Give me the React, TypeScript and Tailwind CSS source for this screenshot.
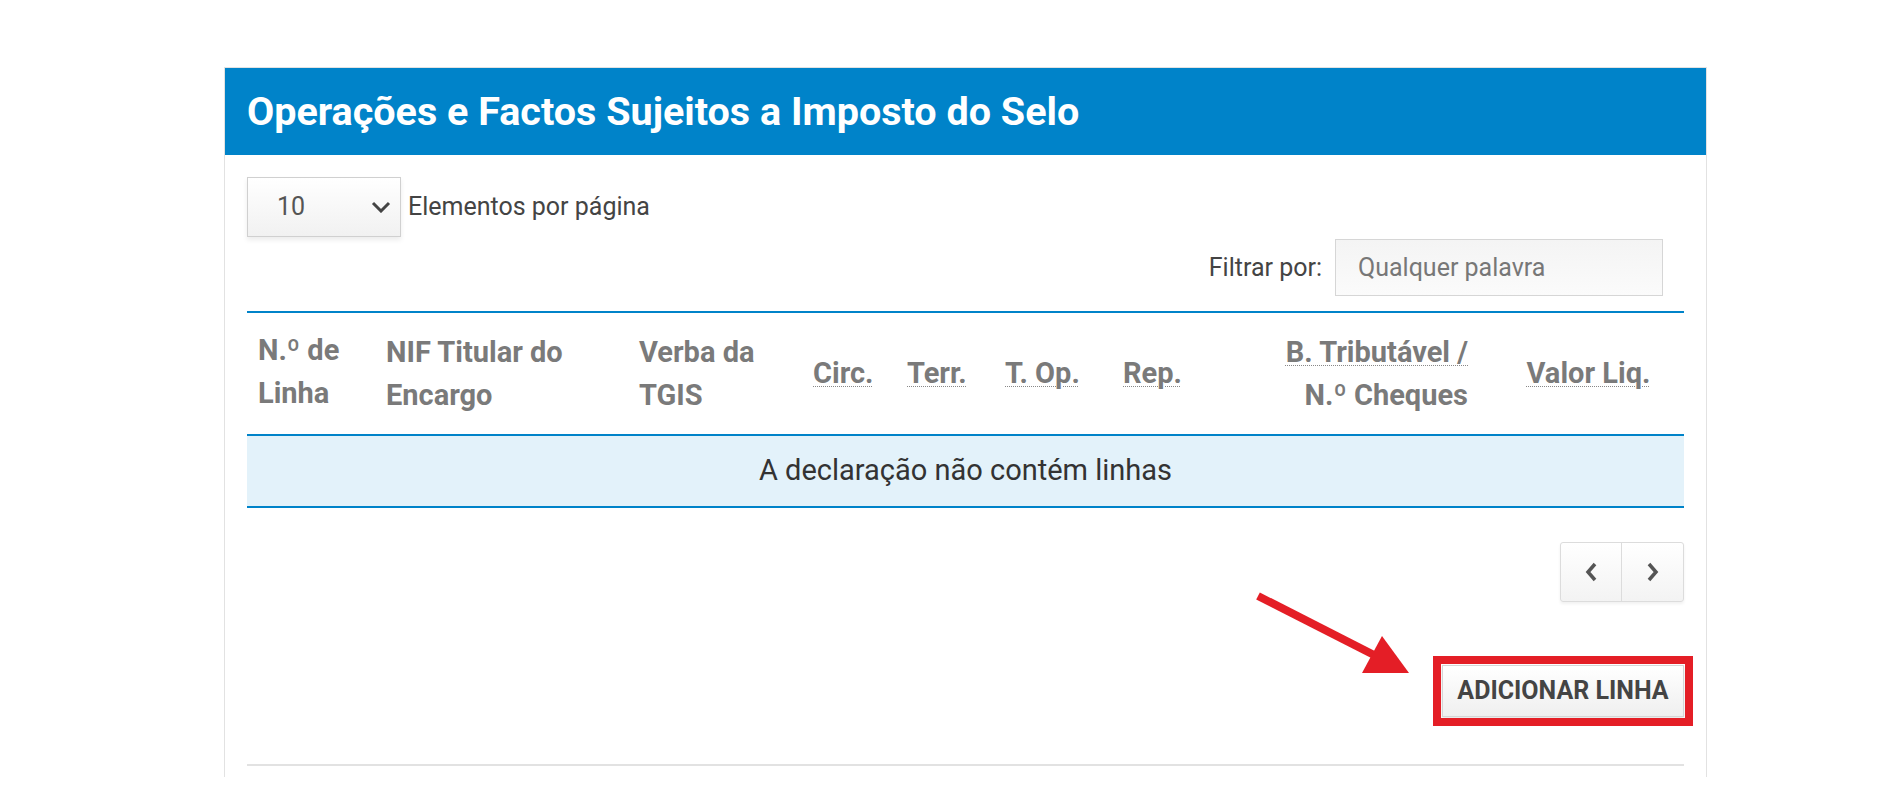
import React from "react";

const font = { fontFamily: "Roboto, 'Liberation Sans', sans-serif" };

function Abbr({ children }: { children: React.ReactNode }) {
  return (
    <abbr className="underline decoration-dotted decoration-1 underline-offset-[3px] decoration-[#888]">
      {children}
    </abbr>
  );
}

export default function App() {
  return (
    <div className="relative min-h-[786px] bg-white pt-[67px]" style={font}>
      <div className="ml-[224px] w-[1483px] border border-b-0 border-[#e2e2e2] h-[710px]">
        <div className="h-[87px] bg-[#0083c9] flex items-center pl-[22px]">
          <h1 className="text-white font-bold text-[39.5px] leading-none">
            Operações e Factos Sujeitos a Imposto do Selo
          </h1>
        </div>

        <div className="px-[22px] pt-[22px]">
          <div className="flex items-center gap-[7px]">
            <div className="w-[154px] h-[60px] border border-[#d0d0d0] bg-gradient-to-b from-white to-[#f1f1f1] shadow-[0_3px_5px_rgba(0,0,0,0.08)] flex items-center justify-between pl-[29px] pr-[9px]">
              <span className="text-[25px] text-[#555]">10</span>
              <svg width="20" height="12" viewBox="0 0 20 12">
                <polyline points="2,2 10,10 18,2" fill="none" stroke="#444" strokeWidth="3" />
              </svg>
            </div>
            <span className="text-[25px] text-[#444]">Elementos por página</span>
          </div>

          <div className="flex justify-end items-center gap-[13px] mt-[2px] pr-[21px]">
            <span className="text-[25px] text-[#444]">Filtrar por:</span>
            <input
              placeholder="Qualquer palavra"
              className="w-[328px] h-[57px] border border-[#d6d6d6] bg-gradient-to-b from-[#f4f4f4] to-[#fbfbfb] pl-[22px] text-[25px] placeholder:text-[#777] outline-none"
            />
          </div>

          <table className="w-full table-fixed border-collapse mt-[15px] border-t-2 border-[#0083c9]">
            <colgroup>
              <col className="w-[128px]" />
              <col className="w-[253px]" />
              <col className="w-[174px]" />
              <col className="w-[94px]" />
              <col className="w-[98px]" />
              <col className="w-[118px]" />
              <col className="w-[148px]" />
              <col className="w-[219px]" />
              <col className="w-[205px]" />
            </colgroup>
            <thead>
              <tr className="border-b-2 border-[#0083c9] text-[#7a7a7a] text-[29px] leading-[43px] font-bold align-middle">
                <th className="text-left font-bold px-[11px] pt-[16px] pb-[19px]">
                  N.º de<br />Linha
                </th>
                <th className="text-left font-bold px-[11px]">
                  NIF Titular do<br />Encargo
                </th>
                <th className="text-left font-bold px-[11px]">
                  Verba da<br />TGIS
                </th>
                <th className="text-left font-bold px-[11px]"><Abbr>Circ.</Abbr></th>
                <th className="text-left font-bold px-[11px]"><Abbr>Terr.</Abbr></th>
                <th className="text-left font-bold px-[11px]"><Abbr>T. Op.</Abbr></th>
                <th className="text-left font-bold px-[11px]"><Abbr>Rep.</Abbr></th>
                <th className="text-right font-bold px-[11px]">
                  <Abbr>B. Tributável /</Abbr>
                  <br />
                  N.º Cheques
                </th>
                <th className="text-center font-bold pl-[25px] pr-[11px]"><Abbr>Valor Liq.</Abbr></th>
              </tr>
            </thead>
            <tbody>
              <tr className="border-b-2 border-[#0083c9] bg-[#e3f2fa]">
                <td colSpan={9} className="h-[72px] text-center text-[29px] text-[#333]">
                  A declaração não contém linhas
                </td>
              </tr>
            </tbody>
          </table>

          <div className="flex justify-end mt-[34px]">
            <div className="flex h-[60px] border border-[#dcdcdc] rounded-[3px] bg-gradient-to-b from-white to-[#f3f3f3] shadow-[0_2px_3px_rgba(0,0,0,0.06)]">
              <button className="w-[61px] flex items-center justify-center border-r border-[#dcdcdc]">
                <svg width="14" height="22" viewBox="0 0 14 22">
                  <polyline points="11,3 4,11 11,19" fill="none" stroke="#555" strokeWidth="3.5" />
                </svg>
              </button>
              <button className="w-[61px] flex items-center justify-center">
                <svg width="14" height="22" viewBox="0 0 14 22">
                  <polyline points="3,3 10,11 3,19" fill="none" stroke="#555" strokeWidth="3.5" />
                </svg>
              </button>
            </div>
          </div>

          <div className="flex justify-end mt-[63px]">
            <button className="h-[52px] w-[242px] border border-[#d5d5d5] bg-gradient-to-b from-white to-[#efefef] shadow-[0_3px_5px_rgba(0,0,0,0.1)] text-[25px] font-bold text-[#444] outline-solid outline-8 outline-offset-1 outline-[#e41e26]">
              ADICIONAR LINHA
            </button>
          </div>

          <div className="mt-[47px] h-[2px] bg-[#e2e2e2]" />
        </div>
      </div>

      <svg
        className="absolute left-[1250px] top-[588px]"
        width="170"
        height="95"
        viewBox="0 0 170 95"
      >
        <line x1="8" y1="8" x2="124" y2="67" stroke="#e41e26" strokeWidth="8" />
        <polygon points="132,48 112,85 159,85" fill="#e41e26" />
      </svg>
    </div>
  );
}
